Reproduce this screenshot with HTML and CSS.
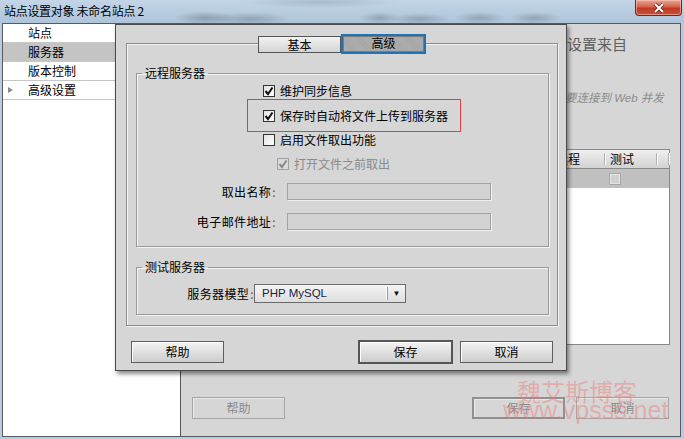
FILE: index.html
```html
<!DOCTYPE html>
<html lang="zh-CN">
<head>
    <meta charset="UTF-8">
    <meta name="viewport" content="width=device-width, initial-scale=1.0">
    <title>站点设置对象 未命名站点 2</title>
    <link rel="stylesheet" href="styles.css">
</head>
<body>

<div class="window">
    <!-- barra del titolo -->
    <div class="titlebar">
        <span class="title">站点设置对象 未命名站点 2</span>
        <span class="close">
            <svg width="14" height="10" viewBox="0 0 14 10"><path d="M3 1 L11 9 M11 1 L3 9" stroke="#5a1a12" stroke-width="3.4"/><path d="M3 1 L11 9 M11 1 L3 9" stroke="#fff" stroke-width="2"/></svg>
        </span>
    </div>

    <div class="client">
        <ul class="sidebar">
            <li>站点</li>
            <li class="selected">服务器</li>
            <li>版本控制</li>
            <li><span class="arrow"></span>高级设置</li>
        </ul>

        <!-- finestra sotto il dialogo -->
        <div class="main">
            <p class="intro">设置来自</p>
            <p class="note">如果要连接到 Web 并发</p>
            <div class="table">
                <div class="thead">
                    <span>名称</span><span>地址</span><span>连接</span><span>远程</span><span>测试</span><span></span>
                </div>
                <div class="trow">
                    <span></span><span></span><span></span><span></span><span><i class="cell-box"></i></span><span></span>
                </div>
            </div>
            <div class="main-buttons">
                <span class="btn off">帮助</span>
                <span class="spacer"></span>
                <span class="btn off default">保存</span>
                <span class="btn off">取消</span>
            </div>
        </div>
    </div>

    <!-- dialogo "高级" -->
    <div class="dialog">
        <div class="tabs">
            <span class="tab">基本</span>
            <span class="tab active">高级</span>
        </div>
        <div class="tab-panel">
            <fieldset class="group remote">
                <legend>远程服务器</legend>
                <label class="check"><span class="box"><svg width="10" height="10" viewBox="0 0 10 10"><path d="M1.5 5 L4 8 L8.5 1.5" fill="none" stroke="#111" stroke-width="2"/></svg></span>维护同步信息</label>
                <div class="highlight">
                    <label class="check"><span class="box"><svg width="10" height="10" viewBox="0 0 10 10"><path d="M1.5 5 L4 8 L8.5 1.5" fill="none" stroke="#111" stroke-width="2"/></svg></span>保存时自动将文件上传到服务器</label>
                </div>
                <label class="check third"><span class="box"></span>启用文件取出功能</label>
                <label class="check sub disabled"><span class="box"><svg width="10" height="10" viewBox="0 0 10 10"><path d="M1.5 5 L4 8 L8.5 1.5" fill="none" stroke="#8a8a8a" stroke-width="2"/></svg></span>打开文件之前取出</label>
                <div class="field first">
                    <span class="label">取出名称<b>:</b></span>
                    <span class="input"></span>
                </div>
                <div class="field second">
                    <span class="label">电子邮件地址<b>:</b></span>
                    <span class="input"></span>
                </div>
            </fieldset>

            <fieldset class="group test">
                <legend>测试服务器</legend>
                <div class="field model">
                    <span class="label">服务器模型<b>:</b></span>
                    <span class="select">PHP MySQL<span class="drop">&#9660;</span></span>
                </div>
            </fieldset>
        </div>
        <div class="buttons">
            <span class="btn">帮助</span>
            <span class="spacer"></span>
            <span class="btn default">保存</span>
            <span class="btn">取消</span>
        </div>
    </div>

    <div class="watermark">
        <div class="wm-cn">魏艾斯博客</div>
        <div class="wm-en">www.vpsss.net</div>
    </div>
</div>

</body>
</html>
```

FILE: styles.css
```css
    body {
        margin: 0;
        width: 684px;
        height: 439px;
        overflow: hidden;
        background-color: #b4cce4;
        font-family: "Liberation Sans", "Noto Sans CJK SC", sans-serif;
        font-size: 12px;
        color: #000;
    }
    .window {
        position: relative;
        height: 439px;
    }
    .titlebar {
        height: 23px;
        display: flex;
        justify-content: space-between;
        align-items: flex-start;
        background:
            radial-gradient(ellipse 30px 7px at 205px 18px, rgba(70, 80, 95, 0.35), transparent),
            radial-gradient(ellipse 40px 7px at 250px 19px, rgba(70, 80, 95, 0.3), transparent),
            radial-gradient(ellipse 20px 6px at 380px 18px, rgba(70, 80, 95, 0.3), transparent),
            radial-gradient(ellipse 30px 6px at 420px 19px, rgba(70, 80, 95, 0.3), transparent),
            radial-gradient(ellipse 25px 6px at 480px 18px, rgba(70, 80, 95, 0.3), transparent),
            radial-gradient(ellipse 25px 6px at 535px 18px, rgba(70, 80, 95, 0.3), transparent),
            radial-gradient(ellipse 80px 6px at 320px 2px, rgba(90, 110, 130, 0.25), transparent),
            linear-gradient(180deg, #c3d5e7 0%, #aec4da 100%);
    }
    .title {
        padding: 3px 0 0 4px;
        line-height: 16px;
        font-family: "Noto Sans CJK SC", sans-serif;
        font-size: 12px;
        letter-spacing: -0.3px;
    }
    .close {
        width: 47px;
        height: 16px;
        margin-right: 2px;
        box-sizing: border-box;
        display: flex;
        align-items: center;
        justify-content: center;
        border: 1px solid #6e2a20;
        border-top: none;
        border-radius: 0 0 4px 4px;
        background: linear-gradient(180deg, #e9a594 0%, #d5614c 45%, #bf3a26 55%, #c9503a 100%);
        box-shadow: inset 0 0 0 1px rgba(255, 210, 200, 0.5);
    }
    .client {
        display: flex;
        height: 414px;
        margin: 0 3px 0 2px;
        box-sizing: border-box;
        border: 1px solid #5a5a5a;
    }
    .sidebar {
        list-style: none;
        margin: 0;
        padding: 0;
        width: 178px;
        flex-shrink: 0;
        background-color: #fff;
        border-right: 1px solid #555;
        box-sizing: border-box;
        font-family: "Noto Sans CJK SC", sans-serif;
    }
    .sidebar li {
        height: 18px;
        line-height: 18px;
        padding-left: 25px;
        border-bottom: 1px solid #c6c6c6;
        position: relative;
    }
    .sidebar li.selected {
        background-color: #c4c4c4;
    }
    .arrow {
        position: absolute;
        left: 5px;
        top: 6px;
        border-left: 5px solid #8a8a8a;
        border-top: 3.5px solid transparent;
        border-bottom: 3.5px solid transparent;
    }
    .main {
        flex: 1;
        background-color: #d6d6d6;
        padding-top: 12px;
    }
    .intro {
        margin: 0;
        padding-left: 386px;
        font-family: "Noto Sans CJK SC", sans-serif;
        font-size: 15px;
        line-height: 16px;
        color: #606060;
        white-space: nowrap;
    }
    .note {
        margin: 39px 0 0;
        padding-left: 361px;
        font-style: italic;
        font-size: 11.5px;
        line-height: 14px;
        color: #8c8c8c;
        white-space: nowrap;
    }
    .table {
        margin: 44px 0 0 19px;
        width: 470px;
        height: 196px;
        box-sizing: border-box;
        border: 1px solid #888;
        background-color: #fff;
    }
    .thead, .trow {
        display: grid;
        grid-template-columns: 150px 100px 100px 54px 52px 1fr;
    }
    .thead {
        height: 18px;
        line-height: 18px;
        background: linear-gradient(180deg, #f0f0f0, #d2d2d2);
        border-bottom: 1px solid #8a8a8a;
        font-family: "Noto Sans CJK SC", sans-serif;
    }
    .thead span {
        padding-left: 5px;
        border-right: 1px solid #b0b0b0;
        box-shadow: 1px 0 0 #fff;
        margin: 3px 0;
        line-height: 12px;
    }
    .trow {
        height: 19px;
        background-color: #c0c0c0;
    }
    .trow span {
        display: flex;
        align-items: center;
        padding-left: 4px;
    }
    .cell-box {
        width: 10px;
        height: 10px;
        border: 1px solid #a8a8a8;
        background-color: #d0d0d0;
        box-shadow: inset 0 0 0 1px #e4e4e4;
    }
    .main-buttons {
        display: flex;
        gap: 11px;
        margin: 52px 11px 0 11px;
    }
    .spacer {
        flex: 1;
    }
    .btn {
        width: 93px;
        height: 22px;
        box-sizing: border-box;
        line-height: 20px;
        text-align: center;
        border: 1px solid #5e5e5e;
        background: linear-gradient(180deg, #f4f4f4 0%, #dcdcdc 60%, #cdcdcd 100%);
        box-shadow: inset 1px 1px 0 #fff;
        font-family: "Noto Sans CJK SC", sans-serif;
    }
    .btn.default {
        border: 2px solid #555;
        line-height: 18px;
    }
    .btn.off {
        color: #8a8a8a;
        background: #d6d6d6;
        border-color: #a6a6a6;
        box-shadow: inset 1px 1px 0 #e8e8e8;
    }
    .btn.off.default {
        border-color: #909090;
    }
    .dialog {
        position: absolute;
        left: 115px;
        top: 24px;
        width: 452px;
        height: 347px;
        box-sizing: border-box;
        border: 1px solid #4a4a4a;
        background-color: #d6d6d6;
        box-shadow: 2px 3px 4px rgba(0, 0, 0, 0.45);
    }
    .tabs {
        position: relative;
        z-index: 1;
        display: flex;
        justify-content: center;
        align-items: center;
        height: 20px;
        margin: 9px 0 -11px 10px;
        width: 432px;
        font-family: "Noto Sans CJK SC", sans-serif;
    }
    .tab {
        width: 83px;
        height: 17px;
        box-sizing: border-box;
        line-height: 15px;
        text-align: center;
        border: 1px solid #555;
        background: linear-gradient(180deg, #f2f2f2, #d4d4d4);
    }
    .tab.active {
        width: 85px;
        height: 20px;
        line-height: 14px;
        border: 2px solid #1f74b8;
        box-shadow: inset 0 0 0 1px #7a7a7a;
        background-color: #a6a6a6;
        background-image: repeating-linear-gradient(45deg, rgba(255, 255, 255, 0.08) 0 1px, transparent 1px 2px);
    }
    .tab-panel {
        margin-left: 10px;
        width: 432px;
        box-sizing: border-box;
        border: 1px solid #8c8c8c;
        box-shadow: inset 1px 1px 0 #f4f4f4, 1px 1px 0 #f4f4f4;
        padding-bottom: 10px;
    }
    .group {
        margin: 0 0 0 9px;
        padding: 0;
        width: 413px;
        box-sizing: border-box;
        border: 1px solid #9a9a9a;
        box-shadow: inset 1px 1px 0 #f4f4f4, 1px 1px 0 #f4f4f4;
        min-inline-size: 0;
    }
    .group legend {
        margin-left: 5px;
        padding: 0 3px;
        line-height: 16px;
        font-family: "Noto Sans CJK SC", sans-serif;
    }
    .remote {
        margin-top: 21px;
        padding-bottom: 16px;
    }
    .test {
        margin-top: 12px;
        padding-bottom: 11px;
    }
    .check {
        display: flex;
        align-items: center;
        height: 20px;
        line-height: 16px;
        padding-left: 126px;
        font-family: "Noto Sans CJK SC", sans-serif;
    }
    .box {
        width: 12px;
        height: 12px;
        box-sizing: border-box;
        margin-right: 5px;
        border: 1px solid #333;
        background: linear-gradient(135deg, #e2e2e2, #fff);
        display: flex;
        align-items: center;
        justify-content: center;
    }
    .highlight {
        margin: -2px 0 0 110px;
        width: 214px;
        height: 33px;
        box-sizing: border-box;
        border: 1px solid #e53d3d;
        padding-top: 6px;
    }
    .highlight .check {
        padding-left: 15px;
    }
    .check.third {
        margin-top: -2px;
    }
    .check.sub {
        margin-top: 4px;
        padding-left: 140px;
    }
    .check.disabled {
        color: #8a8a8a;
    }
    .check.disabled .box {
        border-color: #a0a0a0;
        background: #dadada;
    }
    .field {
        display: flex;
        align-items: center;
        line-height: 16px;
        font-family: "Noto Sans CJK SC", sans-serif;
    }
    .field.first {
        margin-top: 9px;
    }
    .field.second {
        margin-top: 13px;
    }
    .field .label {
        width: 139px;
        text-align: right;
        letter-spacing: 0.4px;
    }
    .field .label b {
        font-weight: normal;
        color: #7a5410;
        margin-left: 1px;
    }
    .input {
        margin-left: 11px;
        width: 204px;
        height: 17px;
        box-sizing: border-box;
        border: 1px solid #a2a2a2;
        background-color: #d2d2d2;
        box-shadow: 1px 1px 0 #f0f0f0;
    }
    .field.model {
        margin-top: 9px;
    }
    .field.model .label {
        width: 117px;
    }
    .select {
        position: relative;
        width: 152px;
        height: 19px;
        box-sizing: border-box;
        line-height: 17px;
        padding-left: 7px;
        border: 1px solid #6a6a6a;
        background: linear-gradient(180deg, #f4f4f4, #dedede);
        color: #1a2040;
        font-family: "Liberation Sans", sans-serif;
        font-size: 11.5px;
        letter-spacing: 0;
    }
    .drop {
        position: absolute;
        right: 0;
        top: 2px;
        width: 17px;
        height: 13px;
        line-height: 13px;
        border-left: 1px solid #999;
        box-shadow: -1px 0 0 #fff;
        text-align: center;
        font-size: 8px;
        color: #111;
    }
    .buttons {
        display: flex;
        gap: 7px;
        margin: 15px 13px 0 15px;
    }
    .buttons .btn.default {
        width: 95px;
        height: 24px;
        margin-top: -1px;
        line-height: 20px;
    }
    .watermark {
        position: absolute;
        left: 503px;
        top: 379px;
        color: rgba(235, 120, 120, 0.45);
        pointer-events: none;
    }
    .wm-cn {
        padding-left: 14px;
        font-family: "Noto Sans CJK SC", sans-serif;
        font-size: 24px;
        line-height: 24px;
    }
    .wm-en {
        margin-top: -6px;
        font-family: "Liberation Sans", sans-serif;
        font-size: 25px;
        line-height: 26px;
    }
```
